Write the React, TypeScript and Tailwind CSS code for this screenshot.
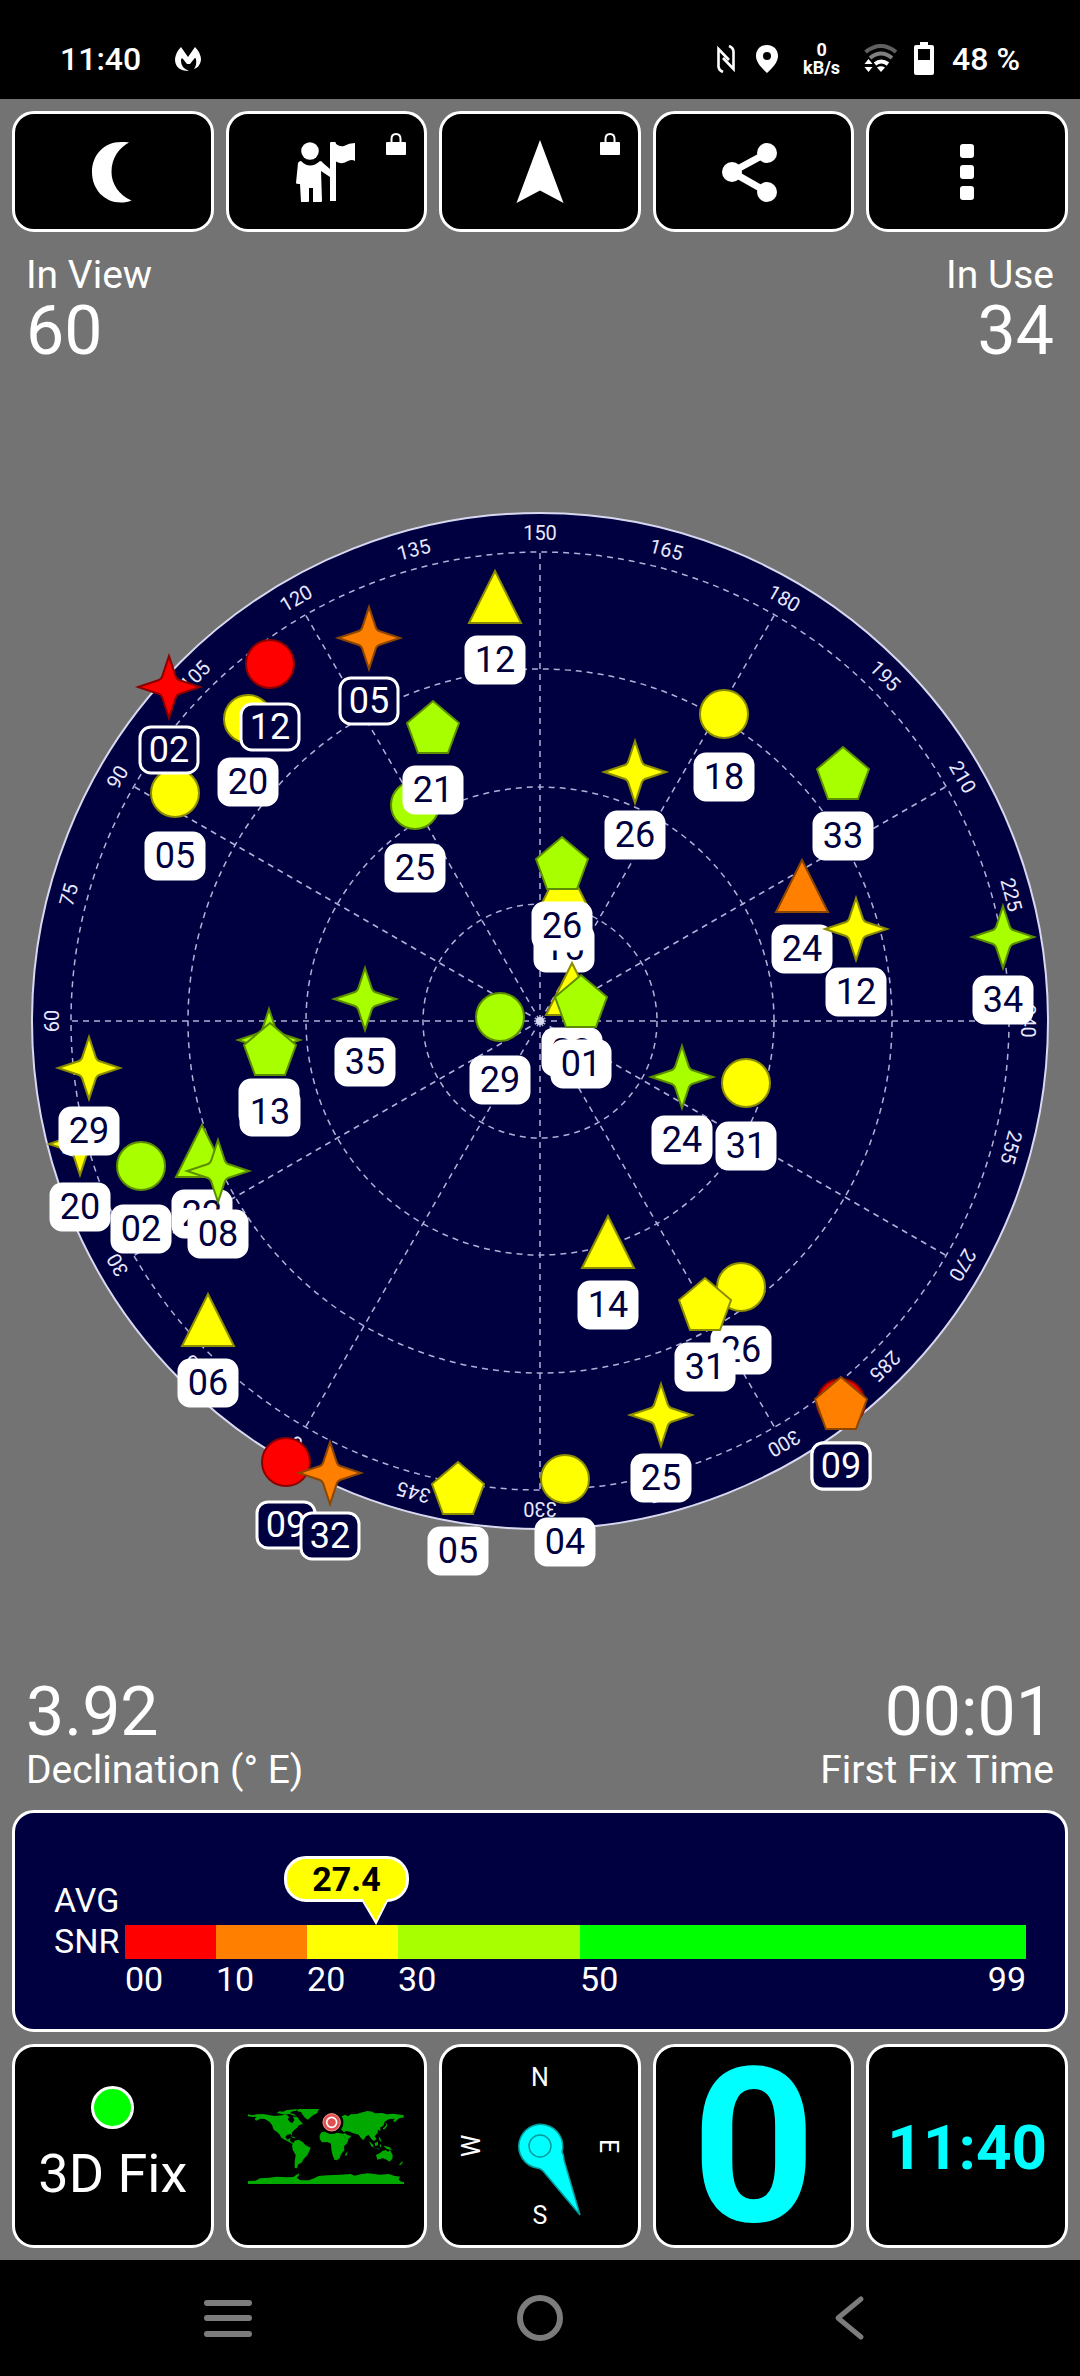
import type { ReactNode } from "react";

type Shape = "circle" | "triangle" | "star" | "pentagon";
type Level = "red" | "orange" | "yellow" | "lime";

interface Satellite {
  shape: Shape;
  level: Level;
  id: string;
  x: number;
  y: number;
  unused?: boolean;
}

const FILL: Record<Level, string> = {
  red: "#ff0000",
  orange: "#ff8000",
  yellow: "#ffff00",
  lime: "#a8ff00",
};

const EDGE: Record<Level, string> = {
  red: "#8c0000",
  orange: "#8c4600",
  yellow: "#8c8c00",
  lime: "#5c8c00",
};

/* Positions are offsets from the zenith, painted in list order. */
const SATELLITES: Satellite[] = [
  { shape: "circle", level: "yellow", id: "20", x: -292, y: -302 },
  { shape: "circle", level: "red", id: "12", x: -270, y: -357, unused: true },
  { shape: "circle", level: "yellow", id: "05", x: -365, y: -228 },
  { shape: "circle", level: "lime", id: "25", x: -125, y: -216 },
  { shape: "circle", level: "lime", id: "29", x: -40, y: -4 },
  { shape: "circle", level: "yellow", id: "18", x: 184, y: -307 },
  { shape: "circle", level: "yellow", id: "31", x: 206, y: 62 },
  { shape: "circle", level: "yellow", id: "26", x: 201, y: 266 },
  { shape: "circle", level: "yellow", id: "04", x: 25, y: 458 },
  { shape: "circle", level: "lime", id: "02", x: -399, y: 145 },
  { shape: "circle", level: "red", id: "09", x: -254, y: 441, unused: true },
  { shape: "circle", level: "red", id: "09", x: 301, y: 382, unused: true },
  { shape: "triangle", level: "yellow", id: "12", x: -45, y: -424 },
  { shape: "triangle", level: "orange", id: "24", x: 262, y: -135 },
  { shape: "triangle", level: "yellow", id: "15", x: 24, y: -136 },
  { shape: "triangle", level: "yellow", id: "23", x: 32, y: -32 },
  { shape: "triangle", level: "yellow", id: "14", x: 68, y: 221 },
  { shape: "triangle", level: "lime", id: "22", x: -338, y: 130 },
  { shape: "triangle", level: "yellow", id: "06", x: -332, y: 299 },
  { shape: "star", level: "red", id: "02", x: -371, y: -334, unused: true },
  { shape: "star", level: "orange", id: "05", x: -171, y: -383, unused: true },
  { shape: "star", level: "yellow", id: "26", x: 95, y: -249 },
  { shape: "star", level: "yellow", id: "12", x: 316, y: -92 },
  { shape: "star", level: "lime", id: "34", x: 463, y: -84 },
  { shape: "star", level: "lime", id: "35", x: -175, y: -22 },
  { shape: "star", level: "lime", id: "13", x: -271, y: 19 },
  { shape: "star", level: "yellow", id: "20", x: -460, y: 123 },
  { shape: "star", level: "yellow", id: "29", x: -451, y: 47 },
  { shape: "star", level: "lime", id: "08", x: -322, y: 150 },
  { shape: "star", level: "lime", id: "24", x: 142, y: 56 },
  { shape: "star", level: "yellow", id: "25", x: 121, y: 394 },
  { shape: "star", level: "orange", id: "32", x: -210, y: 452, unused: true },
  { shape: "pentagon", level: "lime", id: "21", x: -107, y: -294 },
  { shape: "pentagon", level: "lime", id: "33", x: 303, y: -248 },
  { shape: "pentagon", level: "lime", id: "26", x: 22, y: -158 },
  { shape: "pentagon", level: "lime", id: "01", x: 41, y: -20 },
  { shape: "pentagon", level: "lime", id: "13", x: -270, y: 28 },
  { shape: "pentagon", level: "yellow", id: "31", x: 165, y: 283 },
  { shape: "pentagon", level: "yellow", id: "05", x: -82, y: 467 },
  { shape: "pentagon", level: "orange", id: "09", x: 301, y: 382, unused: true },
];

function Marker({ shape, level }: { shape: Shape; level: Level }) {
  const paint = { fill: FILL[level], stroke: EDGE[level], strokeWidth: 2 };
  if (shape === "circle") return <circle r="24" {...paint} />;
  if (shape === "triangle") return <path d="M0 -26 L26 26 L-26 26 Z" {...paint} />;
  if (shape === "star")
    return (
      <path d="M0 -31 L7 -10 Q8 -8 10 -7 L31 0 L10 7 Q8 8 7 10 L0 31 L-7 10 Q-8 8 -10 7 L-31 0 L-10 -7 Q-8 -8 -7 -10 Z" {...paint} />
    );
  return <path d="M0 -26 L26 -4 L15 26 L-15 26 L-26 -4 Z" {...paint} />;
}

function SkyView() {
  const spokes = [0, 30, 60, 90, 120, 150];
  const rings = [117, 234, 352, 469];
  const bearings = Array.from({ length: 24 }, (_, i) => i * 15);
  return (
    <svg viewBox="-540 -570 1080 1140" className="block w-full" role="img" aria-label="Satellite sky view">
      <circle r="508" fill="#000040" stroke="#d8d8f0" strokeWidth="2" />
      <g fill="none" stroke="#b0b0d8" strokeWidth="1.5" strokeDasharray="6 5">
        {rings.map((r) => (
          <circle key={r} r={r} />
        ))}
        {spokes.map((a) => (
          <g key={a} transform={`rotate(${a})`}>
            <path d="M0 0 V-469" />
            <path d="M0 0 V469" />
          </g>
        ))}
      </g>
      <circle r="4" fill="#d8d8f0" />
      <g fill="#e8e8ff" fontSize="20" textAnchor="middle">
        {bearings.map((a) => (
          <text key={a} y="-481" transform={`rotate(${a})`}>
            {(a + 150) % 360}
          </text>
        ))}
      </g>
      {SATELLITES.map((s, i) => (
        <g key={i} transform={`translate(${s.x} ${s.y})`}>
          <Marker shape={s.shape} level={s.level} />
          <rect
            x="-29"
            y="40"
            width="58"
            height="46"
            rx="11"
            fill={s.unused ? "#000040" : "#ffffff"}
            stroke="#ffffff"
            strokeWidth="3"
          />
          <text y="75" fontSize="36" textAnchor="middle" fill={s.unused ? "#ffffff" : "#000040"}>
            {s.id}
          </text>
        </g>
      ))}
    </svg>
  );
}

function StatusBar() {
  return (
    <header className="flex h-[99px] items-center bg-black px-[60px] pt-[19px] text-[32px] leading-10 font-medium text-white">
      <time>11:40</time>
      <svg viewBox="0 0 26 24" className="ml-[34px] h-6 w-[26px]" fill="#fff" aria-hidden="true">
        <path d="M6 0 L13 10 L20 0 Q26 6 26 13 Q25 20 19 22 Q22 18 21 12 Q20 10 19 12 L15 17 H12 L8 12 Q6 10 6 14 Q6 21 14 24 Q0 24 0 12 Q1 5 6 0Z" />
      </svg>
      <div className="ml-auto flex items-center">
        <svg viewBox="0 0 18 28" className="h-7 w-[18px]" fill="none" stroke="#fff" strokeWidth="2.6" aria-hidden="true">
          <path d="M6 27 Q1 25 1.5 20 V4 L12 15" />
          <path d="M12 1 Q17 3 16.500 8 V24 L6 13" />
        </svg>
        <svg viewBox="0 0 24 28" className="ml-5 h-7 w-6" fill="#fff" aria-hidden="true">
          <path fillRule="evenodd" d="M12 0 C5 0 1 5 1 11 C1 18 8 24 12 28 C16 24 23 18 23 11 C23 5 19 0 12 0Z M12 7 A4 4 0 1 1 12 15 A4 4 0 1 1 12 7Z" />
        </svg>
        <div className="ml-6 flex flex-col items-center text-[18px] leading-[18px] font-bold">
          <span>0</span>
          <span>kB/s</span>
        </div>
        <svg viewBox="0 0 34 30" className="ml-6 h-[30px] w-[34px]" fill="none" strokeWidth="4" aria-hidden="true">
          <path d="M1.500 8 Q17 -4 32 8" stroke="#606060" />
          <path d="M6 14 Q17 5 28 14" stroke="#808080" />
          <path d="M11 20 Q17 15 24 20" stroke="#fff" />
          <path d="M13 23.500 Q17 21 21 23.500 L17 28Z" fill="#fff" />
          <path d="M0.500 20 L4.500 15 L8.500 20Z M0.500 23 L4.500 28 L8.500 23Z" fill="#fff" />
        </svg>
        <svg viewBox="0 0 20 34" className="ml-4 h-[34px] w-5" fill="#fff" aria-hidden="true">
          <path fillRule="evenodd" d="M6 0 H14 V3 H18 Q20 3 20 5 V31 Q20 33 18 33 H2 Q0 33 0 31 V5 Q0 3 2 3 H6Z M4 7 V18 H16 V7Z" />
        </svg>
        <span className="ml-[18px]">48 %</span>
      </div>
    </header>
  );
}

function ToolButton({ label, locked, children }: { label: string; locked?: boolean; children: ReactNode }) {
  return (
    <button
      type="button"
      aria-label={label}
      className="relative flex h-[121px] items-center justify-center rounded-[22px] border-3 border-white bg-black"
    >
      <svg viewBox="-36 -36 72 72" className="size-[72px]" fill="#fff" aria-hidden="true">
        {children}
      </svg>
      {locked && (
        <svg viewBox="0 0 20 22" className="absolute top-[19px] right-[18px] h-[22px] w-5" aria-hidden="true">
          <rect y="9" width="20" height="13" rx="1" fill="#fff" />
          <path d="M5.500 10 V6 Q5.500 1 10 1 Q14.500 1 14.500 6 V10" fill="none" stroke="#fff" strokeWidth="2" />
        </svg>
      )}
    </button>
  );
}

function Toolbar() {
  return (
    <nav className="grid grid-cols-5 gap-3 px-3">
      <ToolButton label="Night mode">
        <path d="M16 -29.500 C6 -24 -1.500 -14 -1.500 0 C-1.500 12 6 23 18.500 28.500 C15 30 12 30.500 8 30.500 C-9 30.500 -21 17 -21 0 C-21 -17 -9 -30 8 -30 C11 -30.300 14 -30 16 -29.500Z" />
      </ToolButton>
      <ToolButton label="Waypoints" locked>
        <circle cx="-16" cy="-21" r="8.800" />
        <path d="M4 -29 Q4 -30 5 -30 H9 Q10 -30 10 -28 Q14 -25 18 -26 Q23 -29 29 -29 V-11 Q26 -13 22 -11 Q16 -7 10 -10.500 V29 H4 V5 L-5 -1 L-4 29 Q-4 30 -5 30 H-13 V16 H-17 V29 Q-17 30 -18 30 H-25 L-26 12 Q-30 12 -30 11 L-28 -9 Q-27 -11 -25 -11 Q-16 -2 -6 -11 Q-4 -11 -3 -9 L4 -3Z" />
      </ToolButton>
      <ToolButton label="Navigate" locked>
        <path d="M0 -32 L23.500 31 L0 18.500 L-23.500 31Z" />
      </ToolButton>
      <ToolButton label="Share">
        <path d="M13 -19 L-22 0 L13 20" fill="none" stroke="#fff" strokeWidth="7" />
        <circle cx="13" cy="-19" r="10" />
        <circle cx="-22" cy="0" r="10" />
        <circle cx="13" cy="20" r="10" />
      </ToolButton>
      <ToolButton label="Menu">
        <rect x="-7" y="-28" width="14" height="14" rx="3" />
        <rect x="-7" y="-7" width="14" height="14" rx="3" />
        <rect x="-7" y="14" width="14" height="14" rx="3" />
      </ToolButton>
    </nav>
  );
}

const SCALE = [
  { tick: "00", grow: "grow-10", fill: "bg-[#ff0000]" },
  { tick: "10", grow: "grow-10", fill: "bg-[#ff8000]" },
  { tick: "20", grow: "grow-10", fill: "bg-[#ffff00]" },
  { tick: "30", grow: "grow-20", fill: "bg-[#a8ff00]" },
  { tick: "50", grow: "grow-49", fill: "bg-[#00ff00]" },
];

function SnrPanel() {
  return (
    <section className="mx-3 flex h-[222px] rounded-[22px] border-3 border-white bg-[#000040] px-[39px] text-[34px] leading-[41px] text-white">
      <div className="w-[71px] shrink-0 pt-[67px]">
        <div>AVG</div>
        <div>SNR</div>
      </div>
      <div className="relative mt-28 flex grow flex-col">
        <div className="flex h-[34px]">
          {SCALE.map((s) => (
            <div key={s.tick} className={`basis-0 ${s.grow} ${s.fill}`} />
          ))}
        </div>
        <div className="relative flex">
          {SCALE.map((s) => (
            <div key={s.tick} className={`w-0 basis-0 ${s.grow}`}>
              {s.tick}
            </div>
          ))}
          <div className="absolute right-0">99</div>
        </div>
        <div className="absolute top-[-69px] left-[159px] flex h-[46px] w-[125px] items-center justify-center rounded-[22px] border-3 border-white bg-[#ffff00] font-bold text-black">
          27.4
          <svg viewBox="0 0 26 27" className="absolute top-[39px] right-[18px] h-[27px] w-[26px]" aria-hidden="true">
            <path d="M1 1 H25 L14 26Z" fill="#ffff00" />
            <path d="M1 3 L14 25 L25 3" fill="none" stroke="#fff" strokeWidth="2" />
            <path d="M2 0 H24 L23 5 H3Z" fill="#ffff00" />
          </svg>
        </div>
      </div>
    </section>
  );
}

function WorldMap() {
  return (
    <svg viewBox="24 30 468 225" className="h-[75px] w-[156px]" aria-hidden="true">
      <g fill="#00a800">
        <path d="M24 46 L36 49 L50 46 L70 45 L90 49 L105 51 L125 49 L140 47 L147 54 L144 62 L149 68 L157 73 L163 63 L159 53 L171 53 L179 64 L189 75 L177 79 L171 86 L162 94 L155 102 L157 111 L152 106 L141 107 L136 115 L142 122 L151 117 L150 126 L158 131 L165 136 L156 134 L146 128 L134 122 L124 116 L118 106 L110 98 L101 92 L96 78 L88 68 L74 60 L62 59 L48 65 L44 59 L50 53 L38 54 L24 52Z" />
        <path d="M110 42 L118 37 L130 38 L138 34 L150 32 L172 30 L168 35 L154 38 L150 43 L162 45 L168 51 L158 49 L148 45 L134 47 L122 44Z" />
        <path d="M176 30 H237 L231 43 L217 50 L204 62 L196 58 L189 49 L184 40 L170 36Z" />
        <path d="M164 125 L176 122 L188 129 L196 138 L212 146 L208 156 L202 169 L191 180 L184 192 L175 196 L171 208 L164 207 L164 188 L167 168 L158 152 L156 139Z" />
        <path d="M150 111 L162 114 L168 118 L160 117Z" />
        <path d="M244 100 L262 95 L282 99 L308 104 L314 116 L326 122 L320 134 L312 142 L313 154 L303 166 L299 178 L290 184 L283 182 L277 166 L274 150 L273 134 L262 129 L246 130 L239 120 L239 109Z" />
        <path d="M316 166 L323 156 L321 168 L316 172Z" />
        <path d="M298 60 L304 52 L316 47 L324 52 L332 46 L350 45 L362 41 L382 36 L398 38 L404 43 L426 42 L440 46 L460 44 L492 49 L490 56 L478 57 L464 70 L460 66 L464 59 L446 61 L434 68 L430 80 L420 86 L422 96 L414 92 L413 102 L404 112 L410 120 L402 126 L394 120 L386 108 L378 112 L370 124 L362 116 L356 107 L338 102 L330 98 L318 96 L312 100 L302 90 L292 90 L288 80Z" />
        <path d="M308 104 L316 103 L322 108 L334 111 L328 118 L318 123Z" />
        <path d="M428 88 L434 84 L438 78 L436 72 L441 74 L440 84 L432 92Z" />
        <path d="M386 126 L398 136 L402 146 L394 142Z M404 132 L414 128 L414 138 L406 142Z M418 138 L424 136 L422 146Z M430 140 L448 144 L456 154 L440 150Z M400 148 L420 149 L418 151Z M416 112 L422 120 L424 130 L418 124Z" />
        <path d="M408 168 L420 162 L428 155 L438 153 L444 159 L450 153 L458 168 L457 180 L448 188 L440 182 L428 178 L412 182Z M477 197 L484 190 L490 186 L486 194 L480 199Z" />
        <path d="M24 246 L46 245 L60 238 L88 236 L110 233 L140 235 L160 234 L168 228 L178 223 L176 230 L170 236 L182 244 L206 244 L222 238 L236 231 L262 229 L300 227 L332 225 L344 230 L362 226 L384 223 L420 227 L446 225 L462 230 L480 233 L476 242 L484 248 L492 249 V255 H24Z" />
      </g>
      <circle cx="275" cy="70" r="35" fill="#000" />
      <circle cx="275" cy="70" r="27" fill="#e05050" />
      <circle cx="275" cy="70" r="26" fill="none" stroke="#f08a8a" strokeWidth="3" />
      <circle cx="275" cy="70" r="15" fill="none" stroke="#fff" strokeWidth="5" />
    </svg>
  );
}

function Compass() {
  return (
    <svg viewBox="-90 -90 180 180" className="size-[180px]" role="img" aria-label="Compass">
      <g fill="#fff" fontSize="25" textAnchor="middle">
        <text y="-60">N</text>
        <text y="-60" transform="rotate(90)">E</text>
        <text y="78">S</text>
        <text y="-60" transform="rotate(-90)">W</text>
      </g>
      <g stroke="#009c9c" strokeWidth="1.500">
        <path
          d="M22 6 Q24 9 24 14 L40 69 L3 25 Q0 22 -3 22 A22 22 0 1 1 22 6Z"
          fill="#00ffff"
        />
        <circle r="11" fill="none" />
      </g>
    </svg>
  );
}

function Tile({ label, children }: { label: string; children: ReactNode }) {
  return (
    <button
      type="button"
      aria-label={label}
      className="flex h-[204px] flex-col items-center justify-center rounded-[22px] border-3 border-white bg-black text-white"
    >
      {children}
    </button>
  );
}

export default function App() {
  return (
    <div className="flex min-h-screen flex-col bg-[#737373] font-[Roboto,sans-serif]">
      <StatusBar />
      <div className="h-3" />
      <Toolbar />

      <main className="relative flex grow flex-col justify-center">
        <dl className="absolute inset-x-0 top-[21px] flex justify-between px-[26px] text-white">
          <div>
            <dt className="text-[39px] leading-[44px]">In View</dt>
            <dd className="mt-1 text-[68px] leading-[60px]">60</dd>
          </div>
          <div className="text-right">
            <dt className="text-[39px] leading-[44px]">In Use</dt>
            <dd className="mt-1 text-[68px] leading-[60px]">34</dd>
          </div>
        </dl>
        <SkyView />
        <dl className="absolute inset-x-0 bottom-[18px] flex justify-between px-[26px] text-white">
          <div className="flex flex-col-reverse">
            <dt className="mt-1.5 text-[39px] leading-[44px]">Declination (° E)</dt>
            <dd className="text-[68px] leading-[60px]">3.92</dd>
          </div>
          <div className="flex flex-col-reverse text-right">
            <dt className="mt-1.5 text-[39px] leading-[44px]">First Fix Time</dt>
            <dd className="text-[68px] leading-[60px]">00:01</dd>
          </div>
        </dl>
      </main>

      <SnrPanel />

      <div className="grid grid-cols-5 gap-3 p-3">
        <Tile label="3D Fix">
          <span className="size-[43px] rounded-full border-3 border-white bg-[#00ff00]" />
          <span className="mt-3 text-[54px] leading-[66px]">3D Fix</span>
        </Tile>
        <Tile label="World map">
          <WorldMap />
        </Tile>
        <Tile label="Compass">
          <Compass />
        </Tile>
        <Tile label="Speed">
          <span className="pt-1 text-[216px] leading-[190px] font-bold text-[#00ffff]">0</span>
        </Tile>
        <Tile label="Clock">
          <span className="pt-1 text-[62px] leading-[64px] font-bold text-[#00ffff]">11:40</span>
        </Tile>
      </div>

      <footer className="flex h-[116px] items-center justify-center gap-64 bg-black">
        <button type="button" aria-label="Recent apps">
          <svg viewBox="0 0 56 56" className="size-14" stroke="#7c7c7c" strokeWidth="6" strokeLinecap="round" aria-hidden="true">
            <path d="M7 13 H49 M7 28 H49 M7 44 H49" />
          </svg>
        </button>
        <button type="button" aria-label="Home">
          <svg viewBox="0 0 56 56" className="size-14" fill="none" stroke="#7c7c7c" strokeWidth="6" aria-hidden="true">
            <circle cx="28" cy="28" r="20" />
          </svg>
        </button>
        <button type="button" aria-label="Back">
          <svg viewBox="0 0 56 56" className="size-14" fill="none" stroke="#7c7c7c" strokeWidth="5" strokeLinecap="round" strokeLinejoin="round" aria-hidden="true">
            <path d="M37 9 L14 28 L37 47" />
          </svg>
        </button>
      </footer>
    </div>
  );
}
